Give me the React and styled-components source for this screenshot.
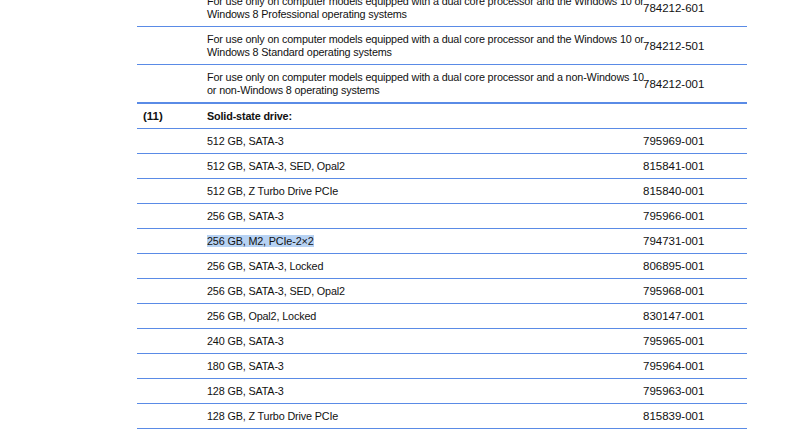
import React from "react";
import styled, { createGlobalStyle } from "styled-components";

const G = createGlobalStyle`
  body { margin: 0; background: #fff; overflow: hidden; }
`;
const Table = styled.div`
  margin: -11px 0 0 137px;
  width: 610px;
  font-family: "Liberation Sans Narrow", "Liberation Sans", Arial, sans-serif;
  font-size: 11.5px;
  color: #111;
`;
const Row = styled.div`
  display: grid;
  grid-template-columns: 70px 436px 1fr;
  min-height: 24px;
  align-items: center;
  padding: ${p => (p.two ? "6px 0 5px" : "0")};
  line-height: 13px;
  white-space: nowrap;
  border-bottom: ${p => (p.thick ? 2 : 1)}px solid #5a8be6;
  font-weight: ${p => (p.bold ? 700 : 400)};
`;
const Num = styled.div`padding-left: 6px;`;
const Desc = styled.div`
  font-size: 10.8px;
  letter-spacing: -0.15px;
  transform-origin: left center;
`;
const Part = styled.div``;
const Sel = styled.span`background: #b7d2f3;`;

const rows = [
  ["For use only on computer models equipped with a dual core processor and the Windows 10 or", "Windows 8 Professional operating systems", "784212-601"],
  ["For use only on computer models equipped with a dual core processor and the Windows 10 or", "Windows 8 Standard operating systems", "784212-501"],
  ["For use only on computer models equipped with a dual core processor and a non-Windows 10", "or non-Windows 8 operating systems", "784212-001", true],
];
const ssd = [
  ["512 GB, SATA-3", "795969-001"],
  ["512 GB, SATA-3, SED, Opal2", "815841-001"],
  ["512 GB, Z Turbo Drive PCIe", "815840-001"],
  ["256 GB, SATA-3", "795966-001"],
  ["256 GB, M2, PCIe-2×2", "794731-001", true],
  ["256 GB, SATA-3, Locked", "806895-001"],
  ["256 GB, SATA-3, SED, Opal2", "795968-001"],
  ["256 GB, Opal2, Locked", "830147-001"],
  ["240 GB, SATA-3", "795965-001"],
  ["180 GB, SATA-3", "795964-001"],
  ["128 GB, SATA-3", "795963-001"],
  ["128 GB, Z Turbo Drive PCIe", "815839-001"],
];

export default function App() {
  return (
    <>
      <G />
      <Table>
        {rows.map(([a, b, p, t], i) => (
          <Row key={i} two thick={t}>
            <Num />
            <Desc>{a}<br />{b}</Desc>
            <Part>{p}</Part>
          </Row>
        ))}
        <Row bold>
          <Num>(11)</Num>
          <Desc>Solid-state drive:</Desc>
          <Part />
        </Row>
        {ssd.map(([d, p, s], i) => (
          <Row key={i}>
            <Num />
            <Desc>{s ? <Sel>{d}</Sel> : d}</Desc>
            <Part>{p}</Part>
          </Row>
        ))}
      </Table>
    </>
  );
}
